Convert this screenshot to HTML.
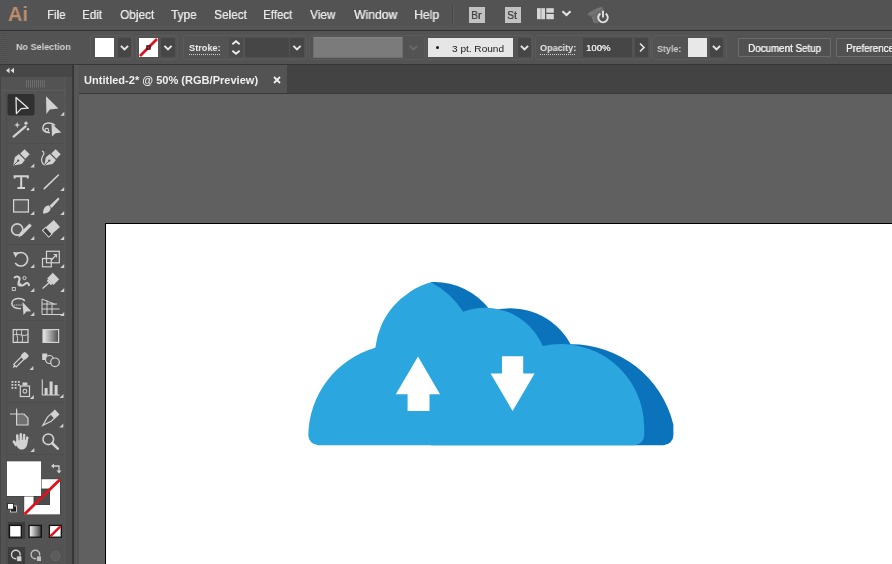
<!DOCTYPE html>
<html><head><meta charset="utf-8"><style>
*{margin:0;padding:0;box-sizing:border-box}
html,body{width:892px;height:564px;overflow:hidden;background:#606060;font-family:"Liberation Sans",sans-serif}
.a{position:absolute}
.t{position:absolute;white-space:nowrap;transform-origin:0 0;will-change:transform}
</style></head><body>

<div class="a" style="left:0;top:0;width:892px;height:30px;background:#535353"></div>
<div class="a" style="left:0;top:26px;width:892px;height:1px;background:#575757"></div>
<div class="a" style="left:0;top:28px;width:892px;height:1px;background:#585858"></div>
<div class="a" style="left:0;top:30px;width:892px;height:1px;background:#333"></div>
<div class="a" style="left:0;top:31px;width:892px;height:33px;background:#535353"></div>
<div class="a" style="left:0;top:64px;width:892px;height:1px;background:#363636"></div>
<div class="a" style="left:73px;top:65px;width:819px;height:28px;background:#434343"></div>
<div class="a" style="left:79px;top:65px;width:208px;height:28px;background:#535353"></div>
<div class="a" style="left:73px;top:93px;width:819px;height:1px;background:#3a3a3a"></div>
<div class="a" style="left:0;top:65px;width:72px;height:499px;background:#535353"></div>
<div class="a" style="left:72px;top:65px;width:1.5px;height:499px;background:#383838"></div>
<div class="a" style="left:73.5px;top:65px;width:5.5px;height:499px;background:#545454"></div>
<div class="a" style="left:76px;top:65px;width:1px;height:499px;background:#5a5a5a"></div>
<div class="a" style="left:105px;top:223px;width:787px;height:341px;background:#fff;border-left:1px solid #000;border-top:1px solid #000"></div>

<svg class="a" style="left:0;top:0" width="892" height="564" viewBox="0 0 892 564">
<path fill="#0b73bb" d="M430.91,445.30 L430.91,282.18 A69.70,69.70 0 0 1 490.87,311.22 A68.10,68.10 0 0 1 570.66,344.30 A104.90,104.90 0 0 1 673.40,424.70 L673.40,435.30 A10.00,10.00 0 0 1 663.40,445.30 Z"/>
<path fill="#2ba6df" d="M318.31,445.30 A10.00,10.00 0 0 1 308.31,435.30 A92.50,92.50 0 0 1 375.30,347.69 A76.90,76.90 0 0 1 430.91,282.36 A86.10,86.10 0 0 1 463.18,311.82 A62.30,62.30 0 0 1 542.65,346.00 A83.40,83.40 0 0 1 644.20,427.40 L644.20,435.30 A10.00,10.00 0 0 1 634.20,445.30 Z"/>
<path fill="#fff" d="M418,356.6 L440,394.3 L429.5,394.3 L429.5,411 L407.6,411 L407.6,394.3 L395.8,394.3 Z"/>
<path fill="#fff" d="M502,356.3 L523.2,356.3 L523.2,373.4 L534.6,373.4 L512.6,411 L490.6,373.4 L502,373.4 Z"/>
</svg>
<div class="a" style="left:0;top:0;width:33px;height:29px;background:#525456"></div>
<div class="t" style="left:7.5px;top:1.5px;font-size:21px;line-height:24px;font-weight:bold;color:#bf8d6d;transform:scaleX(0.95)">Ai</div>
<div class="a" style="left:452px;top:5px;width:1px;height:20px;background:#484848"></div><div class="a" style="left:453px;top:5px;width:1px;height:20px;background:#5c5c5c"></div>
<div class="a" style="left:469px;top:7px;width:16px;height:16px;background:#c2c2c2"></div>
<div class="t" style="left:471px;top:8.5px;font-size:11.5px;line-height:13px;color:#444;text-shadow:0.3px 0 0 #444;transform:scaleX(0.9)">Br</div>
<div class="a" style="left:504.5px;top:7px;width:16.5px;height:16px;background:#c2c2c2"></div>
<div class="t" style="left:507px;top:8.5px;font-size:11.5px;line-height:13px;color:#444;text-shadow:0.3px 0 0 #444;transform:scaleX(0.9)">St</div>
<svg class="a" style="left:528px;top:0" width="90" height="30"><rect x="9" y="8.2" width="8" height="11" fill="#d6d6d6"/><rect x="12.6" y="8.2" width="0.8" height="11" fill="#8a8a8a"/><rect x="18.3" y="8.2" width="7.5" height="4.5" fill="#d6d6d6"/><rect x="18.3" y="14" width="7.5" height="5.2" fill="#d6d6d6"/>
<polyline points="34.5,11.2 38.5,15 42.5,11.2" fill="none" stroke="#e6e6e6" stroke-width="2"/>
<path d="M59,14.5 C62,11 67,8.5 74,6.5 L76,10 L72,17 L70,23.5 L66,23 L64,17 Z" fill="#6c6c6c"/><path d="M61,14 L68,12 M65,16.5 L66,22 M68,11 L73,8" stroke="#7e7e7e" stroke-width="1.2" fill="none"/>
<path d="M72.3,13.6 A4.8,4.8 0 1 0 77.7,13.6" fill="none" stroke="#e0e0e0" stroke-width="1.9"/><path d="M75,10.8 V17.6" stroke="#e0e0e0" stroke-width="1.9"/></svg>
<div class="t" style="left:46.89px;top:7.8px;font-size:12.57px;line-height:15.08px;text-shadow:0.3px 0 0 #e6e6e6;color:#e6e6e6;transform:scaleX(0.911);">File</div>
<div class="t" style="left:81.89px;top:7.8px;font-size:12.57px;line-height:15.08px;text-shadow:0.3px 0 0 #e6e6e6;color:#e6e6e6;transform:scaleX(0.914);">Edit</div>
<div class="t" style="left:119.6px;top:7.8px;font-size:12.57px;line-height:15.08px;text-shadow:0.3px 0 0 #e6e6e6;color:#e6e6e6;transform:scaleX(0.941);">Object</div>
<div class="t" style="left:171.0px;top:7.8px;font-size:12.57px;line-height:15.08px;text-shadow:0.3px 0 0 #e6e6e6;color:#e6e6e6;transform:scaleX(0.937);">Type</div>
<div class="t" style="left:213.66px;top:7.8px;font-size:12.57px;line-height:15.08px;text-shadow:0.3px 0 0 #e6e6e6;color:#e6e6e6;transform:scaleX(0.935);">Select</div>
<div class="t" style="left:263.09px;top:7.8px;font-size:12.57px;line-height:15.08px;text-shadow:0.3px 0 0 #e6e6e6;color:#e6e6e6;transform:scaleX(0.913);">Effect</div>
<div class="t" style="left:309.6px;top:7.8px;font-size:12.57px;line-height:15.08px;text-shadow:0.3px 0 0 #e6e6e6;color:#e6e6e6;transform:scaleX(0.933);">View</div>
<div class="t" style="left:353.5px;top:7.8px;font-size:12.57px;line-height:15.08px;text-shadow:0.3px 0 0 #e6e6e6;color:#e6e6e6;transform:scaleX(0.964);">Window</div>
<div class="t" style="left:413.83px;top:7.8px;font-size:12.57px;line-height:15.08px;text-shadow:0.3px 0 0 #e6e6e6;color:#e6e6e6;transform:scaleX(0.968);">Help</div>


<div class="a" style="left:90px;top:35px;width:43px;height:25px;border:1px solid #5b5b5b;border-radius:3px"></div><div class="a" style="left:136px;top:35px;width:42px;height:25px;border:1px solid #5b5b5b;border-radius:3px"></div><div class="a" style="left:183px;top:35px;width:124px;height:25px;border:1px solid #5b5b5b;border-radius:3px"></div><div class="a" style="left:309px;top:35px;width:116px;height:25px;border:1px solid #5b5b5b;border-radius:3px"></div><div class="a" style="left:426px;top:35px;width:107px;height:25px;border:1px solid #5b5b5b;border-radius:3px"></div><div class="a" style="left:535px;top:35px;width:116px;height:25px;border:1px solid #5b5b5b;border-radius:3px"></div><div class="a" style="left:652px;top:35px;width:75px;height:25px;border:1px solid #5b5b5b;border-radius:3px"></div>
<div class="a" style="left:1px;top:33px;width:6px;height:29px;background:repeating-linear-gradient(0deg,#4a4a4a 0 1px,#5a5a5a 1px 2px)"></div>
<div class="t" style="left:15.5px;top:41.1px;font-size:9.78px;line-height:11.74px;font-weight:bold;color:#d2d2d2;transform:scaleX(0.924);">No Selection</div>
<div class="a" style="left:95px;top:38px;width:19px;height:19px;background:#fff"></div>
<div class="a" style="left:118px;top:38px;width:13px;height:19px;background:#464646"><svg width="13" height="19" style="display:block;opacity:1"><polyline points="2.9,7.9 6.5,11.4 10.1,7.9" fill="none" stroke="#e6e6e6" stroke-width="2"/></svg></div>
<div class="a" style="left:139px;top:38px;width:19px;height:19px;background:#fff"><svg width="19" height="19" style="display:block"><line x1="1" y1="18" x2="18" y2="1" stroke="#d9141e" stroke-width="2.6"/><rect x="7.8" y="7.8" width="3.4" height="3.4" fill="#d9141e" stroke="#1a1a1a" stroke-width="1"/></svg></div>
<div class="a" style="left:161px;top:38px;width:14px;height:19px;background:#464646"><svg width="14" height="19" style="display:block;opacity:1"><polyline points="3.4,7.9 7.0,11.4 10.6,7.9" fill="none" stroke="#e6e6e6" stroke-width="2"/></svg></div>
<div class="t" style="left:189.0px;top:43.4px;font-size:9.22px;line-height:11.06px;font-weight:bold;color:#ececec;transform:scaleX(0.994);">Stroke:</div>
<div class="a" style="left:189px;top:54px;width:32px;height:1px;background:repeating-linear-gradient(90deg,#cfcfcf 0 1px,transparent 1px 2px)"></div>
<div class="a" style="left:229px;top:38px;width:14px;height:19px;background:#4b4b4b"><svg width="14" height="19" style="display:block"><polyline points="3.4,6.2 7,3.2 10.6,6.2" fill="none" stroke="#eeeeee" stroke-width="1.8"/><polyline points="3.4,12.8 7,15.8 10.6,12.8" fill="none" stroke="#eeeeee" stroke-width="1.8"/></svg></div>
<div class="a" style="left:245px;top:38px;width:44px;height:19px;background:#464646"></div>
<div class="a" style="left:290px;top:38px;width:14px;height:19px;background:#464646"><svg width="14" height="19" style="display:block;opacity:1"><polyline points="3.4,7.9 7.0,11.4 10.6,7.9" fill="none" stroke="#e6e6e6" stroke-width="2"/></svg></div>
<div class="a" style="left:313px;top:37px;width:90px;height:21px;background:#7b7b7b;border:1px solid #6e6e6e;border-top-color:#858585"></div>
<div class="a" style="left:407px;top:38px;width:13px;height:19px;background:transparent"><svg width="13" height="19" style="display:block;opacity:1"><polyline points="2.9,7.9 6.5,11.4 10.1,7.9" fill="none" stroke="#6a6a6a" stroke-width="2"/></svg></div>
<div class="a" style="left:428px;top:38px;width:85px;height:19px;background:#e6e6e6"></div>
<div class="a" style="left:435.5px;top:46px;width:3px;height:3px;border-radius:50%;background:#1a1a1a"></div>
<div class="t" style="left:451.7px;top:42.6px;font-size:9.78px;line-height:11.74px;color:#1a1a1a;transform:scaleX(1.03);">3 pt. Round</div>
<div class="a" style="left:518px;top:38px;width:13px;height:19px;background:#464646"><svg width="13" height="19" style="display:block;opacity:1"><polyline points="2.9,7.9 6.5,11.4 10.1,7.9" fill="none" stroke="#e6e6e6" stroke-width="2"/></svg></div>
<div class="t" style="left:540.3px;top:42.9px;font-size:9.36px;line-height:11.23px;font-weight:bold;color:#e6e6e6;transform:scaleX(0.97);">Opacity:</div>
<div class="a" style="left:540px;top:54px;width:36px;height:1px;background:repeating-linear-gradient(90deg,#cfcfcf 0 1px,transparent 1px 2px)"></div>
<div class="a" style="left:583px;top:38px;width:49px;height:19px;background:#464646"></div>
<div class="t" style="left:586.2px;top:42.2px;font-size:9.5px;line-height:11.4px;text-shadow:0.3px 0 0 #e8e8e8;color:#e8e8e8;transform:scaleX(1.004);">100%</div>
<div class="a" style="left:635px;top:38px;width:13px;height:19px;background:#464646"><svg width="13" height="19" style="display:block"><polyline points="5,5.5 9,9.5 5,13.5" fill="none" stroke="#e6e6e6" stroke-width="1.6"/></svg></div>
<div class="t" style="left:657.0px;top:43.0px;font-size:9.78px;line-height:11.74px;font-weight:bold;color:#cfcfcf;transform:scaleX(0.915);">Style:</div>
<div class="a" style="left:688px;top:38px;width:19px;height:19px;background:#e8e8e8"></div>
<div class="a" style="left:710px;top:38px;width:13px;height:19px;background:#464646"><svg width="13" height="19" style="display:block;opacity:1"><polyline points="2.9,7.9 6.5,11.4 10.1,7.9" fill="none" stroke="#e6e6e6" stroke-width="2"/></svg></div>
<div class="a" style="left:738px;top:38px;width:93px;height:19px;border:1px solid #6c6c6c;background:#515151;border-radius:1px"></div>
<div class="t" style="left:748.2px;top:43.4px;font-size:10.06px;line-height:12.07px;text-shadow:0.3px 0 0 #f0f0f0;color:#f0f0f0;transform:scaleX(0.975);">Document Setup</div>
<div class="a" style="left:836px;top:38px;width:70px;height:19px;border:1px solid #6c6c6c;background:#515151;border-radius:1px"></div>
<div class="t" style="left:846.3px;top:43.4px;font-size:10.06px;line-height:12.07px;text-shadow:0.3px 0 0 #f0f0f0;color:#f0f0f0;transform:scaleX(0.975);">Preferences</div>

<div class="t" style="left:83.6px;top:73.9px;font-size:10.89px;line-height:13.07px;font-weight:bold;color:#efefef;transform:scaleX(1.016);">Untitled-2* @ 50% (RGB/Preview)</div>
<div class="a" style="left:273px;top:76px"><svg width="8" height="8" style="display:block"><path d="M1,1 L7,7 M7,1 L1,7" stroke="#f0f0f0" stroke-width="1.8"/></svg></div>

<svg class="a" style="left:0;top:0" width="72" height="564" viewBox="0 0 72 564">
<rect x="0" y="65" width="72" height="12" fill="#474747"/>
<path d="M9.5,67.8 L6,70.5 L9.5,73.2 Z M14,67.8 L10.5,70.5 L14,73.2 Z" fill="#dcdcdc"/>
<rect x="26" y="80" width="1" height="7.5" fill="#6c6c6c"/>
<rect x="28" y="80" width="1" height="7.5" fill="#6c6c6c"/>
<rect x="30" y="80" width="1" height="7.5" fill="#6c6c6c"/>
<rect x="32" y="80" width="1" height="7.5" fill="#6c6c6c"/>
<rect x="34" y="80" width="1" height="7.5" fill="#6c6c6c"/>
<rect x="36" y="80" width="1" height="7.5" fill="#6c6c6c"/>
<rect x="38" y="80" width="1" height="7.5" fill="#6c6c6c"/>
<rect x="40" y="80" width="1" height="7.5" fill="#6c6c6c"/>
<rect x="42" y="80" width="1" height="7.5" fill="#6c6c6c"/>
<rect x="44" y="80" width="1" height="7.5" fill="#6c6c6c"/>
<rect x="2" y="90" width="64" height="1" fill="#5b5b5b"/>
<rect x="6" y="143" width="58" height="1" fill="#4d4d4d"/>
<rect x="6" y="244" width="58" height="1" fill="#4d4d4d"/>
<rect x="6" y="320" width="58" height="1" fill="#4d4d4d"/>
<rect x="6" y="402" width="58" height="1" fill="#4d4d4d"/>
<rect x="6" y="454" width="58" height="1" fill="#4d4d4d"/>
<rect x="66" y="77" width="6" height="487" fill="#505050"/>
<rect x="64.5" y="77" width="1.2" height="487" fill="#5a5a5a"/>
<rect x="0" y="77" width="1" height="487" fill="#464646"/>
<rect x="6" y="91" width="1" height="473" fill="#4c4c4c"/>
<rect x="7.5" y="94" width="27" height="21.5" rx="2" fill="#303030"/>
<path d="M16,97.5 L28.3,108.2 L21.2,108.6 L16.4,113.6 Z" fill="#303030" stroke="#e6e6e6" stroke-width="1.3" stroke-linejoin="round"/>
<path d="M46,96.3 L58.4,108.6 L49.8,109.4 L46.4,114 Z" fill="#d2d2d2"/>
<path d="M64.3,115.8 L60.3,115.8 L64.3,111.8 Z" fill="#cfcfcf"/>
<path d="M13.6,136.6 L25.6,126.4" stroke="#d2d2d2" stroke-width="2.2" stroke-linecap="round"/>
<path d="M17.2,121.8 L18,124.2 L20.4,125 L18,125.8 L17.2,128.2 L16.4,125.8 L14,125 L16.4,124.2 Z" fill="#d2d2d2"/>
<circle cx="26" cy="123.2" r="1.6" fill="#d2d2d2"/><circle cx="28" cy="129.3" r="1.3" fill="#d2d2d2"/>
<path d="M55,125.5 C52,122 44,122 43,127 C42,131 46,133 50,132.5" fill="none" stroke="#d2d2d2" stroke-width="1.4"/>
<circle cx="46.8" cy="130.2" r="1.8" fill="none" stroke="#d2d2d2" stroke-width="1.1"/>
<path d="M51.5,123.5 L61.3,132.5 L55.5,133.2 L52,136.5 Z" fill="#d2d2d2"/>
<g transform="translate(13.3,165.6) rotate(-45)"><path d="M0,0 L7,-4.8 L12.2,-4.3 L12.2,4.3 L7,4.8 Z" fill="#d2d2d2"/><rect x="13.4" y="-3.6" width="6.2" height="7.2" fill="#d2d2d2"/><path d="M0.5,0 L6.5,0" stroke="#535353" stroke-width="0.9"/><circle cx="7" cy="0" r="1.1" fill="#535353"/></g>
<path d="M34.3,167.6 L30.299999999999997,167.6 L34.3,163.6 Z" fill="#cfcfcf"/>
<g transform="translate(44.3,165.6) rotate(-45)"><path d="M0,0 L7,-4.8 L12.2,-4.3 L12.2,4.3 L7,4.8 Z" fill="#d2d2d2"/><rect x="13.4" y="-3.6" width="6.2" height="7.2" fill="#d2d2d2"/><path d="M0.5,0 L6.5,0" stroke="#535353" stroke-width="0.9"/><circle cx="7" cy="0" r="1.1" fill="#535353"/></g>
<path d="M44.5,165 C41,163 41,159 42.5,156.5 C44,154 45,152 42,151" fill="none" stroke="#d2d2d2" stroke-width="1.2"/>
<path d="M14.6,178.6 V176.3 H27.8 V178.6 M21.2,176.3 V188 M17.4,188 H25" fill="none" stroke="#d2d2d2" stroke-width="2"/>
<path d="M34.3,191 L30.299999999999997,191 L34.3,187 Z" fill="#cfcfcf"/>
<path d="M44.3,188.6 L58.4,175" stroke="#d2d2d2" stroke-width="1.6" stroke-linecap="round"/>
<path d="M64.2,191 L60.2,191 L64.2,187 Z" fill="#cfcfcf"/>
<rect x="13.6" y="199.8" width="14.8" height="12.2" fill="#5c5c5c" stroke="#dadada" stroke-width="1.2"/>
<path d="M34.3,215 L30.299999999999997,215 L34.3,211 Z" fill="#cfcfcf"/>
<path d="M58.2,197.6 L59.6,199 L51.8,208 L49.6,205.8 Z" fill="#d2d2d2"/>
<path d="M49,205.5 C45,205 43,209 43,213.5 C47,213.5 51,211.5 50.5,207.5 Z" fill="#d2d2d2"/>
<path d="M64.2,215 L60.2,215 L64.2,211 Z" fill="#cfcfcf"/>
<circle cx="17.2" cy="229.5" r="5.6" fill="#5a5a5a" stroke="#d2d2d2" stroke-width="1.6"/>
<path d="M18.3,237.5 L20,232.8 L29.6,223.6 L31.8,225.8 L22.4,235.2 Z" fill="#d2d2d2"/>
<path d="M34.3,240 L30.299999999999997,240 L34.3,236 Z" fill="#cfcfcf"/>
<g transform="translate(51.2,228.6) rotate(-42)"><rect x="-7.6" y="-4.6" width="15.2" height="9.2" fill="#d2d2d2"/><rect x="-7.6" y="-4.6" width="4.6" height="9.2" fill="#3e3e3e" stroke="#d2d2d2" stroke-width="1"/></g>
<path d="M64.2,240 L60.2,240 L64.2,236 Z" fill="#cfcfcf"/>
<path d="M16,254.5 A6.8,6.8 0 1 1 15.2,263" fill="none" stroke="#d2d2d2" stroke-width="1.6"/>
<path d="M13,252 L18.5,252.5 L15.5,257.5 Z" fill="#d2d2d2"/>
<path d="M34.3,268 L30.299999999999997,268 L34.3,264 Z" fill="#cfcfcf"/>
<rect x="46.5" y="251.3" width="12.8" height="11.5" fill="none" stroke="#d2d2d2" stroke-width="1.2"/>
<rect x="42.5" y="258.5" width="8.8" height="8.3" fill="none" stroke="#d2d2d2" stroke-width="1.2"/>
<path d="M51,260.5 L56.5,254.5 M53.5,254.5 H56.5 V257.5" fill="none" stroke="#d2d2d2" stroke-width="1.2"/>
<path d="M64.2,268 L60.2,268 L64.2,264 Z" fill="#cfcfcf"/>
<path d="M14,278 C17,275 21,277 19,281 C17,285 22,287 25,284 C27,282 29,283 29,286" fill="none" stroke="#d2d2d2" stroke-width="2"/>
<circle cx="24.5" cy="278" r="1.6" fill="none" stroke="#d2d2d2" stroke-width="1"/><circle cx="19.5" cy="284.5" r="1.6" fill="none" stroke="#d2d2d2" stroke-width="1"/>
<rect x="12.3" y="287.5" width="3" height="3" fill="none" stroke="#d2d2d2" stroke-width="0.9"/>
<path d="M34.3,292 L30.299999999999997,292 L34.3,288 Z" fill="#cfcfcf"/>
<g transform="translate(51,281) rotate(45)"><rect x="-4.5" y="-7" width="9" height="8" fill="#d2d2d2"/><rect x="-3" y="1" width="6" height="2" fill="#d2d2d2"/></g>
<path d="M42.6,288.6 L48.8,283" stroke="#d2d2d2" stroke-width="1.4"/>
<path d="M64.2,292 L60.2,292 L64.2,288 Z" fill="#cfcfcf"/>
<path d="M24.8,301 C22,297 13,298 12,302.5 C11,307 16,309 21,308.5" fill="none" stroke="#d2d2d2" stroke-width="1.4"/>
<path d="M14,305 H23" stroke="#d2d2d2" stroke-width="1.2" stroke-dasharray="1.2,1"/>
<path d="M22.5,302 L31.2,311.3 L26.5,311.5 L23.5,315 Z" fill="#d2d2d2"/>
<path d="M34.3,316 L30.299999999999997,316 L34.3,312 Z" fill="#cfcfcf"/>
<path d="M42,299 V314.5 H62 M42,299 L55,304.5 M42,304 H57 M42,309 H59.5 M47,300.5 V314.5 M52,302.5 V314.5" fill="none" stroke="#d2d2d2" stroke-width="1"/>
<path d="M64.2,316 L60.2,316 L64.2,312 Z" fill="#cfcfcf"/>
<rect x="13.2" y="329.6" width="14.8" height="12.8" fill="none" stroke="#d2d2d2" stroke-width="1.3"/>
<path d="M17,330 C15,334 19,337 17,342 M22,330 C20,334 24,337 22,342 M13.5,335 C18,333 23,337 28,334.5" fill="none" stroke="#d2d2d2" stroke-width="1"/>
<defs><linearGradient id="g1" x1="0" x2="1" y1="0" y2="0"><stop offset="0" stop-color="#eeeeee"/><stop offset="1" stop-color="#4a4a4a"/></linearGradient><linearGradient id="g2" x1="0" x2="1" y1="0" y2="0"><stop offset="0" stop-color="#ffffff"/><stop offset="1" stop-color="#3a3a3a"/></linearGradient></defs>
<rect x="43" y="329.6" width="15.6" height="12.8" fill="url(#g1)" stroke="#d2d2d2" stroke-width="1.2"/>
<g transform="translate(20.6,360) rotate(-45)"><rect x="-8" y="-1.8" width="11" height="3.6" fill="none" stroke="#d2d2d2" stroke-width="1.2"/><rect x="3" y="-3.2" width="6" height="6.4" rx="1.5" fill="#d2d2d2"/><path d="M-8,0 L-10.5,0" stroke="#d2d2d2" stroke-width="1.4"/></g>
<path d="M33.4,370 L29.4,370 L33.4,366 Z" fill="#cfcfcf"/>
<rect x="42.2" y="353.5" width="5" height="6.5" fill="#d2d2d2"/>
<circle cx="49.5" cy="359.5" r="4" fill="#5a5a5a" stroke="#d2d2d2" stroke-width="1.2"/>
<circle cx="55" cy="362.3" r="4.3" fill="#535353" stroke="#d2d2d2" stroke-width="1.2"/>
<rect x="11.5" y="381" width="1.8" height="1.8" fill="#d2d2d2"/>
<rect x="14.7" y="381" width="1.8" height="1.8" fill="#d2d2d2"/>
<rect x="17.9" y="381" width="1.8" height="1.8" fill="#d2d2d2"/>
<rect x="11.5" y="384" width="1.8" height="1.8" fill="#d2d2d2"/>
<rect x="14.7" y="384" width="1.8" height="1.8" fill="#d2d2d2"/>
<rect x="17.9" y="384" width="1.8" height="1.8" fill="#d2d2d2"/>
<rect x="11.5" y="387" width="1.8" height="1.8" fill="#d2d2d2"/>
<rect x="14.7" y="387" width="1.8" height="1.8" fill="#d2d2d2"/>
<rect x="20.3" y="386" width="9.2" height="10.5" fill="none" stroke="#d2d2d2" stroke-width="1.2"/>
<rect x="22.5" y="382.5" width="4.8" height="3" fill="#d2d2d2"/>
<circle cx="24.9" cy="391.2" r="1.9" fill="none" stroke="#d2d2d2" stroke-width="1.1"/>
<path d="M33.8,399 L29.799999999999997,399 L33.8,395 Z" fill="#cfcfcf"/>
<path d="M42.3,379.5 V395 H59.6" fill="none" stroke="#d2d2d2" stroke-width="1.1"/>
<rect x="44.6" y="388" width="3" height="7" fill="#d2d2d2"/><rect x="49.6" y="381.5" width="3" height="13.5" fill="#d2d2d2"/><rect x="54.6" y="385" width="3" height="10" fill="#d2d2d2"/>
<path d="M63.5,398 L59.5,398 L63.5,394 Z" fill="#cfcfcf"/>
<path d="M16.6,410 V425 H28 V418 L24,414 H16.6" fill="#707070" stroke="#d2d2d2" stroke-width="1.2"/>
<path d="M10,414 H16 M16.6,408.5 V413" stroke="#d2d2d2" stroke-width="1"/>
<g transform="translate(51,418) rotate(-42)"><path d="M-11,0 L-2,-3 L8,-3 L8,2.5 L-2,2.5 Z" fill="none" stroke="#d2d2d2" stroke-width="1.2"/><rect x="2" y="-3" width="6" height="5.5" fill="#d2d2d2"/></g>
<path d="M63.3,427.5 L59.3,427.5 L63.3,423.5 Z" fill="#cfcfcf"/>
<path d="M17.6,442 L17.2,435.4 M20.6,441 L20.8,434.2 M23.6,441 L24.2,435 M26.2,442 L27.3,437.6 M16,445 L13.8,441.6" stroke="#d2d2d2" stroke-width="2.5" stroke-linecap="round" fill="none"/>
<path d="M15.6,441.5 C16,440 27.5,439.5 27.6,441 C27.6,446 25.5,449.6 21.5,449.6 C18.5,449.6 16.5,447 15.6,441.5 Z" fill="#d2d2d2"/>
<path d="M34.3,452 L30.299999999999997,452 L34.3,448 Z" fill="#cfcfcf"/>
<circle cx="48.3" cy="439.3" r="5.3" fill="none" stroke="#d2d2d2" stroke-width="1.6"/>
<path d="M52.2,443.2 L57.8,448.6" stroke="#d2d2d2" stroke-width="2.6" stroke-linecap="round"/>
<rect x="23.7" y="478.7" width="36.8" height="36.2" fill="#3a3a3a"/>
<rect x="24.2" y="479.2" width="35.8" height="35.2" fill="#ffffff"/>
<rect x="34" y="489" width="15.6" height="15.6" fill="#4c4c4c" stroke="#333" stroke-width="0.8"/>
<path d="M24.5,514.2 L60,479.5" stroke="#e0101c" stroke-width="2.8"/>
<rect x="6.4" y="460.8" width="35.2" height="35.7" fill="#3a3a3a"/>
<rect x="6.9" y="461.3" width="34.2" height="34.7" fill="#ffffff"/>
<path d="M53,466 H59 V471" fill="none" stroke="#d2d2d2" stroke-width="1.3"/>
<path d="M51,466 L54,463.5 L54,468.5 Z M59,473.5 L56.5,470.5 L61.5,470.5 Z" fill="#d2d2d2"/>
<rect x="10.5" y="506" width="6" height="6" fill="#1a1a1a" stroke="#e0e0e0" stroke-width="0.8"/>
<rect x="7.6" y="503.4" width="5.8" height="5.8" fill="#fff" stroke="#1a1a1a" stroke-width="0.8"/>
<rect x="7.8" y="522" width="17.4" height="17" fill="#3c3c3c"/>
<rect x="9.5" y="525.4" width="11.8" height="11.8" fill="#fff" stroke="#111" stroke-width="1.3"/>
<rect x="29.1" y="525.4" width="12.2" height="11.8" fill="url(#g2)" stroke="#111" stroke-width="1.3"/>
<rect x="49.4" y="525.4" width="11.9" height="11.8" fill="#fff" stroke="#111" stroke-width="1.3"/>
<path d="M50.3,536.3 L60.4,526.3" stroke="#e0101c" stroke-width="2.4"/>
<rect x="7.8" y="547" width="17.4" height="17" fill="#3c3c3c"/>
<g opacity="1"><circle cx="15.8" cy="554.5" r="4.3" fill="none" stroke="#d2d2d2" stroke-width="1.4"/><rect x="16.8" y="556" width="5" height="5.5" fill="#d2d2d2" stroke="#333" stroke-width="0.6"/></g>
<g opacity="0.85"><circle cx="35.4" cy="554.5" r="4.3" fill="none" stroke="#d2d2d2" stroke-width="1.4"/><rect x="36.4" y="556" width="5" height="5.5" fill="#d2d2d2" stroke="#333" stroke-width="0.6"/></g>
<circle cx="55.5" cy="556" r="4.5" fill="#5c5c5c" stroke="#666" stroke-width="1"/>
</svg>

</body></html>
